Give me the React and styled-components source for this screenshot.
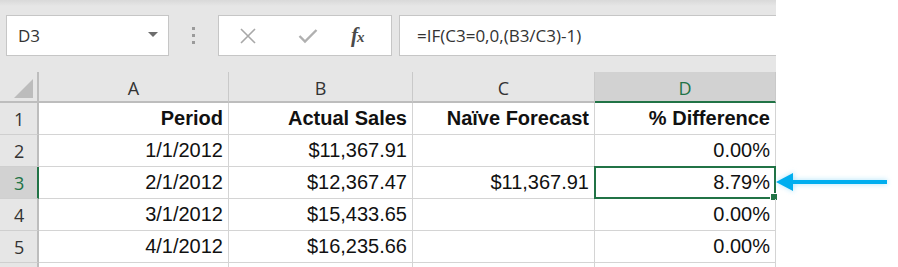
import React from "react";
import styled, { createGlobalStyle } from "styled-components";

const GlobalStyle = createGlobalStyle`
  html, body { margin: 0; padding: 0; background: #ffffff; }
  body { width: 898px; height: 267px; overflow: hidden; font-family: "Liberation Sans", Arial, sans-serif; }
`;

const Page = styled.div`
  position: relative;
  width: 898px;
  height: 267px;
  overflow: hidden;
  display: flex;
`;

const Sheet = styled.div`
  width: 776px;
  display: flex;
  flex-direction: column;
  background: #e6e6e6;
`;

const Toolbar = styled.div`
  flex-shrink: 0;
  height: 72px;
  box-sizing: border-box;
  padding: 15px 0 0 6px;
  display: flex;
  align-items: flex-start;
  background: linear-gradient(#d9d9d9 0px, #e6e6e6 6px, #e6e6e6 100%);
`;

const NameBox = styled.div`
  width: 163px;
  height: 41px;
  box-sizing: border-box;
  background: #ffffff;
  border: 1px solid #c6c6c6;
  display: flex;
  align-items: center;
  justify-content: space-between;
  padding: 0 10px 0 11px;
  font-family: "Open Sans", "Noto Sans", sans-serif;
  font-size: 17px;
  color: #333;
`;

const Caret = styled.span`
  width: 0;
  height: 0;
  border-left: 5px solid transparent;
  border-right: 5px solid transparent;
  border-top: 5px solid #6d6d6d;
  margin-top: -2px;
`;

const Grip = styled.div`
  width: 49px;
  height: 41px;
  display: flex;
  flex-direction: column;
  align-items: center;
  justify-content: center;
  gap: 4px;
`;

const Dot = styled.span`
  width: 3px;
  height: 3px;
  background: #9b9b9b;
`;

const IconBox = styled.div`
  width: 174px;
  height: 41px;
  box-sizing: border-box;
  background: #ffffff;
  border: 1px solid #c6c6c6;
  display: flex;
  align-items: center;
  padding-left: 20px;
`;

const IconSlot = styled.span`
  width: ${(p) => p.$w}px;
  display: flex;
  align-items: center;
`;

const Fx = styled.span`
  font-family: "Liberation Serif", "Times New Roman", serif;
  font-style: italic;
  font-weight: bold;
  font-size: 21px;
  color: #4a4a4a;
  letter-spacing: -1px;
  small { font-size: 15px; }
`;

const FormulaBox = styled.div`
  margin-left: 7px;
  flex: 1;
  height: 41px;
  box-sizing: border-box;
  background: #ffffff;
  border: 1px solid #c6c6c6;
  border-right: none;
  display: flex;
  align-items: center;
  padding-left: 17px;
  font-family: "Open Sans", "Noto Sans", sans-serif;
  font-size: 17px;
  color: #333;
`;

const Grid = styled.div`
  flex-shrink: 0;
  display: grid;
  grid-template-columns: 39px 190px 184px 182px 181px;
  grid-template-rows: 31px repeat(5, 32px) 20px;
  background: #ffffff;
`;

const Corner = styled.div`
  background: #e6e6e6;
  border-right: 2px solid #bdbdbd;
  border-bottom: 2px solid #bdbdbd;
  box-sizing: border-box;
  display: flex;
  align-items: flex-end;
  justify-content: flex-end;
  padding: 0 4px 3px 0;
`;

const CornerTri = styled.span`
  width: 0;
  height: 0;
  border-left: 19px solid transparent;
  border-bottom: 19px solid #bcbcbc;
`;

const ColHead = styled.div`
  box-sizing: border-box;
  background: ${(p) => (p.$sel ? "#d2d2d2" : "#e6e6e6")};
  border-right: 1px solid #c9c9c9;
  border-bottom: 2px solid ${(p) => (p.$sel ? "#217346" : "#bdbdbd")};
  display: flex;
  align-items: center;
  justify-content: center;
  font-family: "Open Sans", "Noto Sans", sans-serif;
  font-size: 18px;
  color: ${(p) => (p.$sel ? "#217346" : "#333")};
  padding-top: 2px;
`;

const RowHead = styled.div`
  box-sizing: border-box;
  background: ${(p) => (p.$sel ? "#d2d2d2" : "#e6e6e6")};
  border-right: 2px solid ${(p) => (p.$sel ? "#217346" : "#bdbdbd")};
  border-bottom: 1px solid #cfcfcf;
  display: flex;
  align-items: center;
  padding-left: 14px;
  font-family: "Open Sans", "Noto Sans", sans-serif;
  font-size: 18px;
  color: ${(p) => (p.$sel ? "#217346" : "#333")};
`;

const Cell = styled.div`
  position: relative;
  box-sizing: border-box;
  border-right: 1px solid #d4d4d4;
  border-bottom: 1px solid #d4d4d4;
  display: flex;
  align-items: flex-end;
  justify-content: flex-end;
  padding: 0 5px 2px 0;
  font-size: 20px;
  line-height: 28px;
  font-weight: ${(p) => (p.$bold ? 700 : 400)};
  color: #111;
  white-space: nowrap;
`;

const Selection = styled.div`
  position: absolute;
  left: -1px;
  top: -1px;
  right: -1px;
  bottom: -1px;
  border: 2px solid #217346;
  pointer-events: none;
`;

const FillHandle = styled.span`
  position: absolute;
  right: -4px;
  bottom: -4px;
  width: 6px;
  height: 6px;
  background: #217346;
  border: 1px solid #ffffff;
`;

const Arrow = styled.svg`
  position: absolute;
  left: 768px;
  top: 166px;
`;

const cols = ["A", "B", "C", "D"];
const rows = [
  ["Period", "Actual Sales", "Naïve Forecast", "% Difference"],
  ["1/1/2012", "$11,367.91", "", "0.00%"],
  ["2/1/2012", "$12,367.47", "$11,367.91", "8.79%"],
  ["3/1/2012", "$15,433.65", "", "0.00%"],
  ["4/1/2012", "$16,235.66", "", "0.00%"],
];

export default function App() {
  return (
    <>
      <GlobalStyle />
      <Page>
        <Sheet>
          <Toolbar>
            <NameBox>
              <span>D3</span>
              <Caret />
            </NameBox>
            <Grip>
              <Dot />
              <Dot />
              <Dot />
            </Grip>
            <IconBox>
              <IconSlot $w={59}>
                <svg width="18" height="18" viewBox="0 0 18 18">
                  <path d="M2 2 L16 16 M16 2 L2 16" stroke="#a8a8a8" strokeWidth="1.6" fill="none" />
                </svg>
              </IconSlot>
              <IconSlot $w={53}>
                <svg width="20" height="16" viewBox="0 0 20 16">
                  <path d="M1.5 8 L7 13.5 L18.5 2" stroke="#b0b0b0" strokeWidth="2.4" fill="none" />
                </svg>
              </IconSlot>
              <IconSlot $w={30}>
                <Fx>
                  f<small>x</small>
                </Fx>
              </IconSlot>
            </IconBox>
            <FormulaBox>=IF(C3=0,0,(B3/C3)-1)</FormulaBox>
          </Toolbar>
          <Grid>
            <Corner>
              <CornerTri />
            </Corner>
            {cols.map((c) => (
              <ColHead key={c} $sel={c === "D"}>
                {c}
              </ColHead>
            ))}
            {rows.map((r, i) => (
              <React.Fragment key={i}>
                <RowHead $sel={i === 2}>{i + 1}</RowHead>
                {r.map((v, j) => (
                  <Cell key={j} $bold={i === 0}>
                    {v}
                    {i === 2 && j === 3 && (
                      <Selection>
                        <FillHandle />
                      </Selection>
                    )}
                  </Cell>
                ))}
              </React.Fragment>
            ))}
            <RowHead />
            {cols.map((c) => (
              <Cell key={c} />
            ))}
          </Grid>
        </Sheet>
        <Arrow width="130" height="34" viewBox="0 0 130 34">
          <defs>
            <filter id="glow" x="-20%" y="-60%" width="140%" height="220%">
              <feGaussianBlur stdDeviation="2.5" />
            </filter>
          </defs>
          <g filter="url(#glow)" opacity="0.55">
            <path d="M8 16 L26 6 L26 13.5 L119 13.5 L119 18.5 L26 18.5 L26 26 Z" fill="#7fd3f7" />
          </g>
          <path d="M8 16 L25 7 L25 14 L119 14 L119 18 L25 18 L25 25 Z" fill="#00aeef" />
        </Arrow>
      </Page>
    </>
  );
}
